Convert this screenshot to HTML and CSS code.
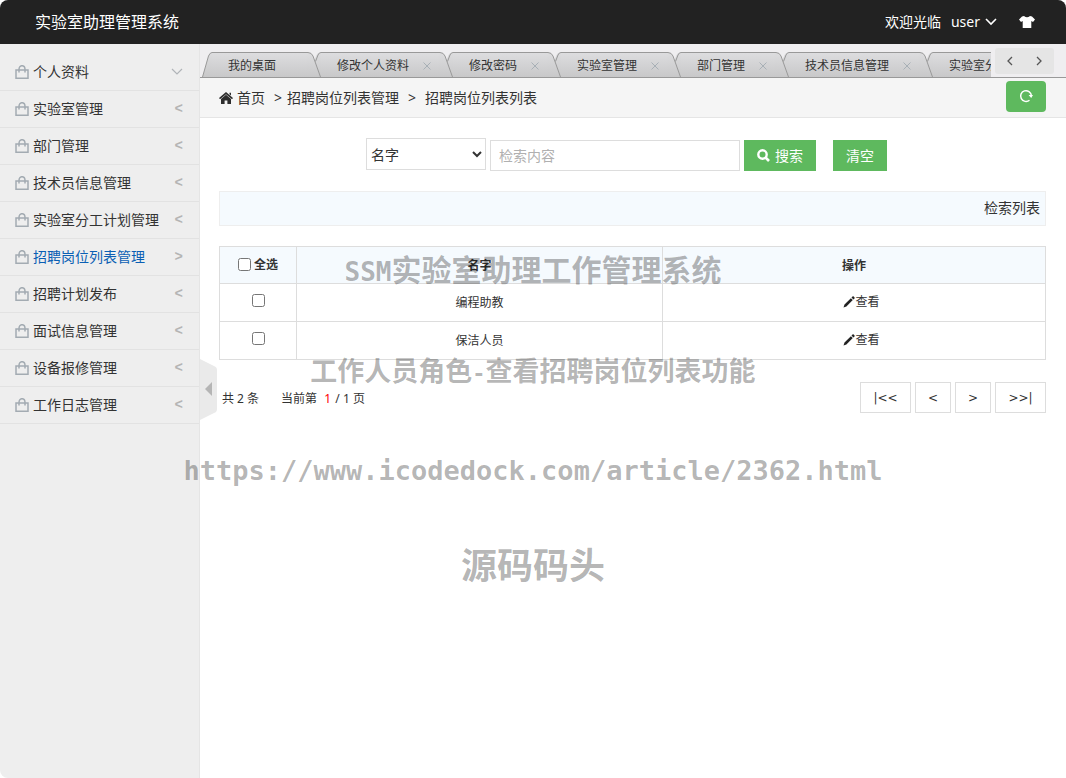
FILE: index.html
```html
<!DOCTYPE html>
<html lang="zh-CN">
<head>
<meta charset="utf-8">
<title>实验室助理管理系统</title>
<link rel="stylesheet" href="styles.css">
</head>
<body>
<svg class="defs" aria-hidden="true">
  <defs>
    <linearGradient id="tab-fill" x1="0" y1="0" x2="0" y2="25" gradientUnits="userSpaceOnUse">
      <stop offset="0" stop-color="#dddddf"/><stop offset="1" stop-color="#c8c8c9"/>
    </linearGradient>
    <symbol id="bag" viewBox="0 0 14 14">
      <path d="M1 5h12v8.300H1zM4 7.500V4.500C4 2 5.300.7 7 .7s3 1.300 3 3.800V7.500" fill="none" stroke="#a3abb2" stroke-width="1.500"/>
    </symbol>
    <symbol id="joint" viewBox="0 0 14 25">
      <path d="M7 25V9L9.500 3Q10.500.5 13 .5H14V25z" fill="url(#tab-fill)"/>
      <path d="M8.500 9.500L11 3Q12 .5 14 .5" fill="none" stroke="#999"/>
      <path d="M0 .5H1Q4.500.5 6 4L13.500 25H0z" fill="url(#tab-fill)"/>
      <path d="M0 .5H1Q4.500.5 6 4L13.500 25" fill="none" stroke="#999"/>
    </symbol>
    <symbol id="pencil" viewBox="0 0 12 12">
      <path d="M.5 11.500L1.500 8.600 7.900 2.200 9.800 4.100 3.400 10.500zM8.500 1.600L9.500.5Q10.100 0 10.700.6L11.400 1.300Q12 2 11.500 2.500L10.400 3.500z" fill="#222"/>
    </symbol>
  </defs>
</svg>
<div class="app">
  <header class="topbar">
    <h1 class="brand">实验室助理管理系统</h1>
    <div class="account">
      <span>欢迎光临</span>
      <button class="user" type="button">user
        <svg width="12" height="8" viewBox="0 0 12 8"><path d="M1 1l5 5 5-5" fill="none" stroke="#fff" stroke-width="1.600"/></svg>
      </button>
      <button class="skin" type="button" aria-label="换肤">
        <svg width="16" height="12" viewBox="0 0 16 12"><path d="M5 0Q8 2.600 11 0L13 .6 16 3.600 14 6 12.300 5V12H3.700V5L2 6 0 3.600 3 .6z" fill="#fff"/></svg>
      </button>
    </div>
  </header>

  <div class="body">
    <aside class="sidebar">
      <nav class="menu">
        <a href="#"><svg class="bag"><use href="#bag"/></svg><span>个人资料</span><svg class="down" viewBox="0 0 12 8"><path d="M1 1l5 5 5-5" fill="none" stroke="#b0b4b8" stroke-width="1.200"/></svg></a>
        <a href="#"><svg class="bag"><use href="#bag"/></svg><span>实验室管理</span><i>&lt;</i></a>
        <a href="#"><svg class="bag"><use href="#bag"/></svg><span>部门管理</span><i>&lt;</i></a>
        <a href="#"><svg class="bag"><use href="#bag"/></svg><span>技术员信息管理</span><i>&lt;</i></a>
        <a href="#"><svg class="bag"><use href="#bag"/></svg><span>实验室分工计划管理</span><i>&lt;</i></a>
        <a href="#" class="active"><svg class="bag"><use href="#bag"/></svg><span>招聘岗位列表管理</span><i>&gt;</i></a>
        <a href="#"><svg class="bag"><use href="#bag"/></svg><span>招聘计划发布</span><i>&lt;</i></a>
        <a href="#"><svg class="bag"><use href="#bag"/></svg><span>面试信息管理</span><i>&lt;</i></a>
        <a href="#"><svg class="bag"><use href="#bag"/></svg><span>设备报修管理</span><i>&lt;</i></a>
        <a href="#"><svg class="bag"><use href="#bag"/></svg><span>工作日志管理</span><i>&lt;</i></a>
      </nav>
      <button class="collapse" type="button" aria-label="收起菜单">
        <svg width="17" height="61" viewBox="0 0 17 61"><path d="M0 0L14 7Q17 8 17 11V50Q17 53 14 54L0 61z" fill="#eaeaea"/><path d="M12 23v14L5 30z" fill="#b5b5b5"/></svg>
      </button>
    </aside>

    <main class="main">
      <div class="tabbar">
        <ul class="tabs">
          <li><svg class="edge" viewBox="0 0 10 25"><path d="M.5 25L6.500 4Q8 .5 10 .5V25z" fill="url(#tab-fill)"/><path d="M.5 25L6.500 4Q8 .5 10 .5" fill="none" stroke="#999"/></svg><span class="tab">我的桌面</span><svg class="joint"><use href="#joint"/></svg></li>
          <li><span class="tab">修改个人资料<svg class="x" viewBox="0 0 8 8"><path d="M.5.5l7 7m0-7l-7 7"/></svg></span><svg class="joint"><use href="#joint"/></svg></li>
          <li><span class="tab">修改密码<svg class="x" viewBox="0 0 8 8"><path d="M.5.5l7 7m0-7l-7 7"/></svg></span><svg class="joint"><use href="#joint"/></svg></li>
          <li><span class="tab">实验室管理<svg class="x" viewBox="0 0 8 8"><path d="M.5.5l7 7m0-7l-7 7"/></svg></span><svg class="joint"><use href="#joint"/></svg></li>
          <li><span class="tab">部门管理<svg class="x" viewBox="0 0 8 8"><path d="M.5.5l7 7m0-7l-7 7"/></svg></span><svg class="joint"><use href="#joint"/></svg></li>
          <li><span class="tab">技术员信息管理<svg class="x" viewBox="0 0 8 8"><path d="M.5.5l7 7m0-7l-7 7"/></svg></span><svg class="joint"><use href="#joint"/></svg></li>
          <li><span class="tab">实验室分工计划管理</span></li>
        </ul>
        <div class="scroller">
          <button type="button" aria-label="向左"><svg width="6" height="10" viewBox="0 0 6 10"><path d="M5 1L1 5l4 4"/></svg></button>
          <button type="button" aria-label="向右"><svg width="6" height="10" viewBox="0 0 6 10"><path d="M1 1l4 4-4 4"/></svg></button>
        </div>
      </div>

      <nav class="crumbs">
        <svg width="14" height="12" viewBox="0 0 14 12"><path d="M7 0L14 6 13 7.200 7 2.200 1 7.200 0 6zM7 2.800L12 7V12H8.400V8.500H5.600V12H2V7zM10.500.8H12V3.500L10.500 2.200z" fill="#2d2d2d"/></svg>
        <a href="#">首页</a><b>&gt;</b><span>招聘岗位列表管理</span><b class="wide">&gt;</b><span>招聘岗位列表列表</span>
        <button class="refresh" type="button" aria-label="刷新"><svg width="14" height="14" viewBox="0 0 14 14"><path d="M10.500 11.200A5.400 5.400 0 1 1 12.400 6.500" fill="none" stroke="#fff" stroke-width="1.500"/><path d="M9.600 6H14L12.200 9z" fill="#fff"/></svg></button>
      </nav>

      <div class="content">
        <form class="search">
          <select aria-label="检索字段"><option>名字</option></select>
          <input type="text" placeholder="检索内容" aria-label="检索内容">
          <button type="button" class="find"><svg width="13" height="13" viewBox="0 0 13 13"><circle cx="5.500" cy="5.500" r="4.200" fill="none" stroke="#fff" stroke-width="2.400"/><path d="M8.500 8.500l3.500 3.500" stroke="#fff" stroke-width="2.600"/></svg>搜索</button>
          <button type="button" class="clear">清空</button>
        </form>
        <div class="caption">检索列表</div>
        <table>
          <colgroup><col class="c1"><col class="c2"><col class="c3"></colgroup>
          <thead><tr><th><label><input type="checkbox">全选</label></th><th>名字</th><th>操作</th></tr></thead>
          <tbody>
            <tr><td><input type="checkbox" aria-label="选择编程助教"></td><td>编程助教</td><td><a href="#"><svg class="pencil"><use href="#pencil"/></svg>查看</a></td></tr>
            <tr><td><input type="checkbox" aria-label="选择保洁人员"></td><td>保洁人员</td><td><a href="#"><svg class="pencil"><use href="#pencil"/></svg>查看</a></td></tr>
          </tbody>
        </table>
        <div class="pager">
          <p><span>共 2 条</span><span>当前第&nbsp; <em>1</em> / 1 页</span></p>
          <div class="pages">
            <button type="button" class="end">|&lt;&lt;</button>
            <button type="button">&lt;</button>
            <button type="button">&gt;</button>
            <button type="button" class="end">&gt;&gt;|</button>
          </div>
        </div>
      </div>
    </main>
  </div>

  <div class="watermark">
    <p class="w1"><span>SSM</span>实验室助理工作管理系统</p>
    <p class="w2">工作人员角色<span>-</span>查看招聘岗位列表功能</p>
    <p class="w3">https://www.icodedock.com/article/2362.html</p>
    <p class="w4">源码码头</p>
  </div>
</div>
</body>
</html>
```
FILE: styles.css
```css
* { box-sizing: border-box; }
body {
  margin: 0;
  background: #fff;
  color: #333;
  font: 14px/20px "Noto Sans", "Noto Sans CJK SC", sans-serif;
}
a { color: inherit; text-decoration: none; }
button, input, select { font: inherit; }
button { padding: 0; border: 0; background: none; color: inherit; cursor: pointer; }
p, h1, ul { margin: 0; padding: 0; }
svg { flex: none; }
.defs { position: absolute; width: 0; height: 0; }

.app {
  position: relative;
  display: flex;
  flex-direction: column;
  min-height: 100vh;
  border-radius: 8px;
  overflow: hidden;
}

.topbar {
  display: flex;
  align-items: center;
  justify-content: space-between;
  height: 44px;
  padding: 0 31px 0 35px;
  background: #222;
  color: #fff;
}
.brand { font-size: 16px; line-height: 24px; font-weight: 400; }
.account { display: flex; align-items: center; gap: 10px; }
.user { display: flex; align-items: center; gap: 5px; }
.skin { display: flex; margin-left: 12px; }

.body { display: flex; flex: 1; }
.sidebar {
  position: relative;
  flex: none;
  width: 200px;
  padding-top: 10px;
  background: #eee;
  border-right: 1px solid #e5e5e5;
}
.menu a {
  display: flex;
  align-items: center;
  gap: 4px;
  height: 37px;
  padding: 0 16px 0 15px;
  border-bottom: 1px solid #e2e2e2;
}
.menu .active { color: #0a5fb4; }
.menu span { flex: 1; }
.menu i { font: 700 14px/20px "Liberation Mono", monospace; color: #b4b4b4; }
.bag { width: 14px; height: 14px; }
.down { width: 12px; height: 8px; }
.collapse { position: absolute; left: 200px; top: 315px; display: flex; }

.main { flex: 1; min-width: 0; background: #fff; }
.tabbar {
  display: flex;
  height: 34px;
  padding: 0 12px 0 2px;
  background: #efeef0;
  border-bottom: 1px solid #999;
}
.tabs {
  display: flex;
  flex: 1;
  min-width: 0;
  align-items: flex-end;
  overflow: hidden;
  list-style: none;
  font-size: 12px;
}
.tabs li { display: flex; flex: none; }
.edge { width: 10px; height: 25px; }
.joint { width: 14px; height: 25px; }
.tab {
  display: flex;
  align-items: center;
  height: 25px;
  padding: 2px 30px 0 16px;
  border-top: 1px solid #999;
  background: linear-gradient(#dddddf, #c8c8c9);
}
.edge + .tab { padding-right: 31px; }
.x { width: 8px; height: 8px; margin: 0 -22px 0 14px; fill: none; stroke: #a8b0b6; }
.scroller {
  display: flex;
  width: 59px;
  height: 26px;
  margin: 4px 0 0 4px;
  border-radius: 3px;
  background: #e5e5e5;
}
.scroller button { display: flex; flex: 1; align-items: center; justify-content: center; }
.scroller path { fill: none; stroke: #555; stroke-width: 1.3; }

.crumbs {
  display: flex;
  align-items: center;
  height: 40px;
  padding: 0 20px 0 19px;
  background: #f5f5f5;
  border-bottom: 1px solid #e5e5e5;
}
.crumbs a { margin-left: 4px; }
.crumbs b { width: 22px; padding-left: 9px; font-weight: 400; }
.crumbs .wide { width: 26px; }
.refresh {
  display: flex;
  align-items: center;
  justify-content: center;
  width: 40px;
  height: 31px;
  margin: 0 0 3px auto;
  border-radius: 4px;
  background: #5eb95e;
}

.content { padding: 20px 20px 20px 19px; }
.search {
  display: flex;
  align-items: flex-end;
  justify-content: center;
  gap: 4px;
  padding-right: 12px;
}
.search select {
  width: 120px;
  height: 32px;
  margin-bottom: 1px;
  border: 1px solid #ddd;
  background: #fff;
  color: #333;
}
.search input {
  width: 250px;
  height: 31px;
  padding: 0 8px;
  border: 1px solid #ddd;
  color: #333;
}
.search input::placeholder { color: #b0b0b0; }
.find, .clear {
  display: flex;
  align-items: center;
  justify-content: center;
  gap: 5px;
  height: 31px;
  background: #5eb95e;
  color: #fff;
}
.find { width: 72px; }
.clear { width: 54px; margin-left: 13px; }

.caption {
  height: 35px;
  margin-top: 20px;
  padding: 0 5px;
  border: 1px solid #eee;
  background: #f5fafe;
  line-height: 32px;
  text-align: right;
}

table {
  width: 100%;
  margin-top: 20px;
  border-collapse: collapse;
  table-layout: fixed;
  font-size: 12px;
}
.c1 { width: 77px; }
.c2 { width: 366px; }
th, td { height: 38px; padding: 1px 0 0; border: 1px solid #ddd; text-align: center; }
th { height: 37px; padding-top: 2px; background: #f5fafe; font-weight: 700; }
th label { display: inline-flex; align-items: center; gap: 3px; }
table input { display: block; width: 13px; height: 13px; margin: 0 auto 6px; }
th input { margin: 0 0 2px; }
td a { display: inline-flex; align-items: center; margin-left: 15px; }
.pencil { width: 12px; height: 12px; }

.pager {
  display: flex;
  align-items: center;
  justify-content: space-between;
  margin-top: 22px;
  padding-left: 3px;
  font-size: 12px;
}
.pager p { display: flex; gap: 22px; padding-top: 2px; }
.pager em { margin: 0 1px; color: #f00; font-style: normal; }
.pages { display: flex; gap: 4px; }
.pages button {
  width: 36px;
  height: 31px;
  border: 1px solid #ddd;
  background: #fff;
  font-family: "DejaVu Sans", sans-serif;
}
.pages .end { width: 51px; }

.watermark {
  position: absolute;
  inset: 219px 0 auto;
  display: grid;
  grid-auto-rows: 98px;
  justify-content: center;
  text-align: center;
  color: rgba(0, 0, 0, 0.3);
  font-weight: 700;
  font-family: "Noto Sans CJK SC", sans-serif;
  line-height: 98px;
  white-space: nowrap;
  pointer-events: none;
}
.watermark span, .w3 { font-family: "DejaVu Sans Mono", monospace; }
.w1 { font-size: 30px; }
.w1 span { font-size: 26px; }
.w2 { font-size: 27px; line-height: 106px; }
.w2 span { font-size: 22px; }
.w3 { font-size: 27px; line-height: 112px; }
.w4 { font-size: 36px; line-height: 100px; }
```
